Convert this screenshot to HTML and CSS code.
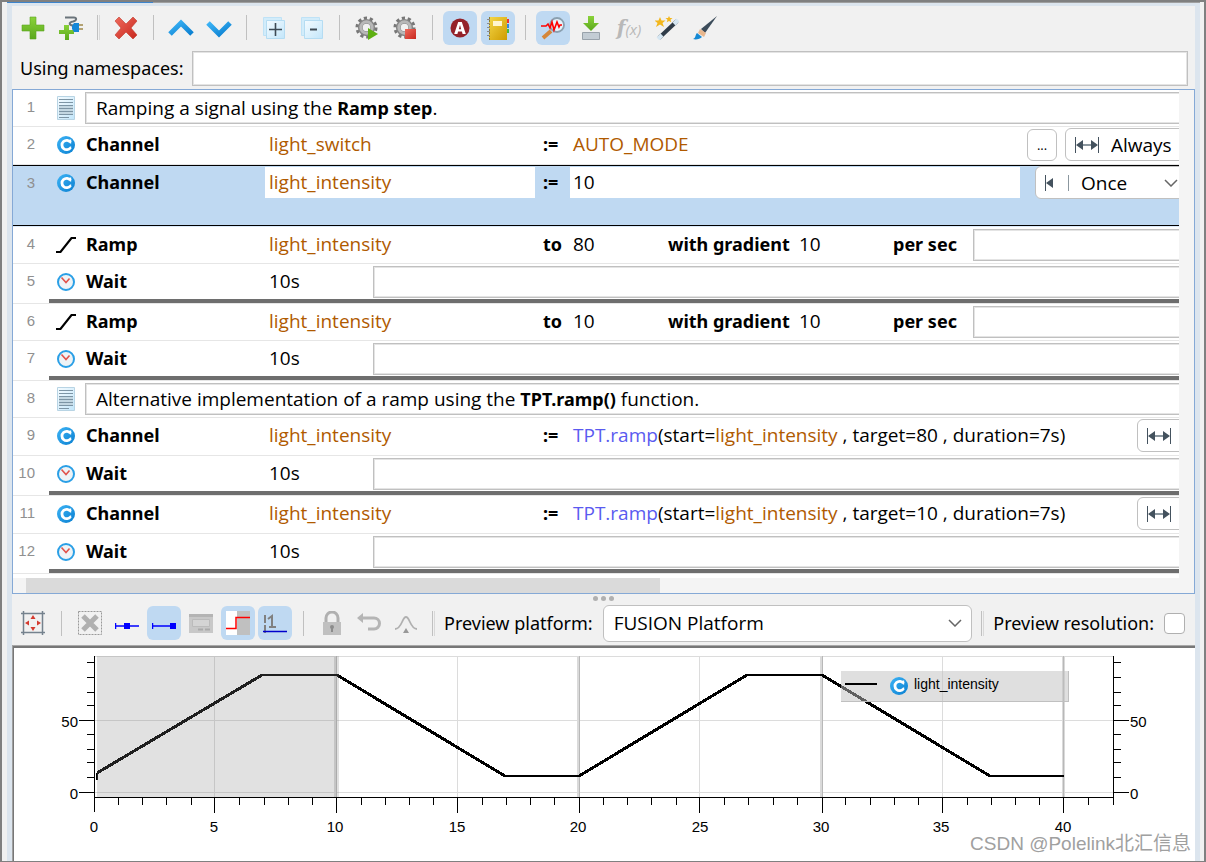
FILE: index.html
```
<!DOCTYPE html>
<html lang="en">
<head>
  <meta charset="UTF-8">
  <title>Step List Editor</title>
  <link rel="stylesheet" href="styles.css">
</head>
<body>

<!-- icons used more than once -->
<svg class="defs" width="0" height="0" aria-hidden="true">
  <defs>
    <linearGradient id="blue" x1="0" y1="0" x2="1" y2="1">
      <stop offset="0" stop-color="#3db4f6"/><stop offset="1" stop-color="#0a7fd0"/>
    </linearGradient>
    <linearGradient id="green" x1="0" y1="0" x2="0" y2="1">
      <stop offset="0" stop-color="#8ad23a"/><stop offset="1" stop-color="#5aa81c"/>
    </linearGradient>
    <linearGradient id="red" x1="0" y1="0" x2="1" y2="1">
      <stop offset="0" stop-color="#ef6a5c"/><stop offset="1" stop-color="#c8281e"/>
    </linearGradient>
    <linearGradient id="gold" x1="0" y1="0" x2="1" y2="1">
      <stop offset="0" stop-color="#f4d648"/><stop offset="1" stop-color="#cf9c00"/>
    </linearGradient>
    <linearGradient id="pale" x1="0" y1="0" x2="1" y2="1">
      <stop offset="0" stop-color="#f4fbff"/><stop offset="1" stop-color="#c3e6fa"/>
    </linearGradient>
    <symbol id="channel" viewBox="0 0 18 18">
      <circle cx="9" cy="9" r="9" fill="url(#blue)"/>
      <path d="M13.500 6.300A4.700 4.700 0 1 0 13.500 11.700" fill="none" stroke="#fff" stroke-width="2.800"/>
      <path d="M13.500 3.500v4M13.500 10.500v2" stroke="#fff" stroke-width="1.400"/>
    </symbol>
    <symbol id="comment" viewBox="0 0 18 24">
      <path d="M.5.5h17v23H.5z" fill="url(#pale)" stroke="#b8d4e4"/>
      <path d="M2 10h14v8H2z" fill="#c3d7e2"/>
      <path d="M2 3.500h14M2 6.500h14M2 9.500h14M2 12.500h14M2 15.500h14M2 18.500h14M2 21.500h10" stroke="#7d95a5"/>
    </symbol>
    <symbol id="clock" viewBox="0 0 18 18">
      <circle cx="9" cy="9" r="8" fill="#eef3f6" stroke="#2a9fe6" stroke-width="2"/>
      <path d="M4.500 4.500 9 9.500l3.500-4" fill="none" stroke="#e0534c" stroke-width="1.600"/>
    </symbol>
    <symbol id="ramp" viewBox="0 0 20 18">
      <path d="M0 16h4.500L15.500 2H20" fill="none" stroke="#000" stroke-width="2.200"/>
    </symbol>
    <symbol id="always" viewBox="0 0 24 16">
      <path d="M.5 0v16M23.500 0v16" stroke="#44525e"/>
      <path d="M5 8h14" stroke="#8b979f" stroke-width="2"/>
      <path d="M1 8l7-5v10zM23 8l-7-5v10z" fill="#44525e"/>
    </symbol>
    <symbol id="gear" viewBox="0 0 24 24">
      <circle cx="12" cy="12" r="9.500" fill="none" stroke="#777" stroke-width="4" stroke-dasharray="3.200 2.770"/>
      <circle cx="12" cy="12" r="6.500" fill="none" stroke="#858585" stroke-width="5"/>
      <circle cx="12" cy="12" r="6" fill="none" stroke="#b8b8b8" stroke-width="3"/>
    </symbol>
  </defs>
</svg>

<div class="window">
  <div class="tab-line"></div>
  <div class="editor">

    <div class="toolbar">
      <button aria-label="Add step"><svg width="24" height="24"><path d="M9 1h6v8h8v6h-8v8H9v-8H1V9h8z" fill="url(#green)" stroke="#5aa520" stroke-width=".6"/></svg></button>
      <button aria-label="Add connected step"><svg width="26" height="24"><path d="M7 1.500h9c3 0 3 3-1 4-5 1-4 4 1 4" fill="none" stroke="#6b747b" stroke-width="2"/><path d="M6 9h5v5h5v4h-5v6H7v-6H1v-4h5z" fill="url(#green)"/><path d="M14 10l2-3h5v9h-5l-2-3z" fill="#1687d8"/><path d="M21 9h4M21 13h4" stroke="#b3a273" stroke-width="2"/></svg></button>
      <i class="sep double"></i>
      <button aria-label="Delete"><svg width="24" height="24"><path d="M5 1l7 7 7-7 4 4-6 7 6 7-4 4-7-7-7 7-4-4 6-7-6-7z" fill="url(#red)" stroke="#c0392b" stroke-width=".6"/></svg></button>
      <i class="sep"></i>
      <button aria-label="Move up"><svg width="26" height="24"><path d="M2 18L13 7l11 11" fill="none" stroke="url(#blue)" stroke-width="5"/></svg></button>
      <button aria-label="Move down"><svg width="26" height="24"><path d="M2 7l11 11L24 7" fill="none" stroke="url(#blue)" stroke-width="5"/></svg></button>
      <i class="sep"></i>
      <button aria-label="Expand all"><svg width="24" height="24"><path d="M1.500 1.500h18v18h-18z" fill="#d2ecfa" stroke="#bfe2f6"/><path d="M4.500 4.500h18v18h-18z" fill="url(#pale)" stroke="#b5dcf2"/><path d="M7 13.500h13M13.500 7v13" stroke="#3e4a54" stroke-width="1.600"/></svg></button>
      <button aria-label="Collapse all"><svg width="24" height="24"><path d="M1.500 1.500h18v18h-18z" fill="#d2ecfa" stroke="#bfe2f6"/><path d="M4.500 4.500h18v18h-18z" fill="url(#pale)" stroke="#b5dcf2"/><path d="M10 13.500h7" stroke="#3e4a54" stroke-width="2"/></svg></button>
      <i class="sep"></i>
      <button aria-label="Run"><svg width="24" height="24"><use href="#gear" width="23" height="23"/><path d="M13 12l10 6-10 6z" fill="#5eb012"/></svg></button>
      <button aria-label="Stop"><svg width="24" height="24"><use href="#gear" width="23" height="23"/><path d="M12 13h11v10H12z" fill="url(#red)"/></svg></button>
      <i class="sep"></i>
      <button class="on" aria-label="Automatic"><svg width="24" height="24"><circle cx="12" cy="12" r="9.500" fill="#94222a"/><path fill-rule="evenodd" d="M10.200 6h3.600l4 12h-3.200l-.7-2.500h-3.800L9.400 18H6.200zM12 9l-1.200 4.200h2.400z" fill="#fff"/></svg></button>
      <button class="on" aria-label="Notebook"><svg width="24" height="24"><path d="M20 3h3v4h-3z" fill="#e33"/><path d="M20 8h3v4h-3z" fill="#38d"/><path d="M20 13h3v4h-3z" fill="#4b4"/><path d="M3 1h18v23H3z" fill="url(#gold)"/><path d="M7 5h9v5H7z" fill="#fff5cf"/><path d="M3.500 1v23" stroke="#8a7a30" stroke-dasharray="2 1"/><path d="M1 3.500h3M1 7.500h3M1 11.500h3M1 15.500h3M1 19.500h3" stroke="#8c8c8c"/></svg></button>
      <i class="sep"></i>
      <button class="on" aria-label="Signal preview"><svg width="24" height="24"><path d="M2 22l8-7" stroke="#d5873a" stroke-width="4"/><circle cx="16" cy="9" r="7" fill="#e7f4fc" stroke="#8ba0b0" stroke-width="1.800"/><path d="M0 10h5l2-2 2 4 2-6 2 8 3-8 2 5 1-2h2" fill="none" stroke="#f00" stroke-width="1.600"/></svg></button>
      <button aria-label="Import"><svg width="20" height="24"><path d="M7 0h6v7h5l-8 8-8-8h5z" fill="url(#green)"/><path d="M1.500 16.500h17v7h-17z" fill="#c3ccd4" stroke="#99a2ab"/></svg></button>
      <button class="fx" aria-label="Function">f<small>(x)</small></button>
      <button aria-label="Wizard"><svg width="24" height="24"><path d="M4 22L22 5" stroke="#2f3b48" stroke-width="4"/><path d="M3 23l4-4M19 8l4-4" stroke="#d5e6f2" stroke-width="4"/><path d="M5 1l1.500 3.500h4L7.500 7 9 11 5 8.500 1 11l1.500-4L-.5 4.500h4z" fill="#f3b71d"/><path d="M14 0l1 2h2.500l-2 1.700.8 2.500L14 5l-2.300 1.200.8-2.500-2-1.700H13z" fill="#f3b71d"/></svg></button>
      <button aria-label="Brush"><svg width="24" height="24"><path d="M24 0L12 17l-4-4z" fill="#3c4c5a"/><path d="M7 13l6 4-2 4-6-4z" fill="#e8b78e"/><path d="M0 23c3-1 2-4 4-6l5 4c-2 2-6 3-9 2z" fill="#1589d4"/></svg></button>
    </div>

    <div class="namespaces">
      <label for="namespaces">Using namespaces:</label>
      <input class="field" id="namespaces" type="text">
    </div>

    <div class="steps-panel">
      <div class="steps-view">
        <ol class="steps">
          <li class="step comment">
            <span class="num">1</span>
            <div class="body">
              <svg class="icon" width="20" height="24"><use href="#comment" width="18" height="24" x="1"/></svg>
              <div class="field text">Ramping a signal using the <b>Ramp step</b>.</div>
            </div>
          </li>
          <li class="step channel">
            <span class="num">2</span>
            <div class="body">
              <svg class="icon" width="20" height="18"><use href="#channel" width="18" height="18" x="1"/></svg>
              <b class="name">Channel</b>
              <span class="target var">light_switch</span>
              <b class="op">:=</b>
              <span class="value var">AUTO_MODE</span>
              <button class="more">...</button>
              <div class="combo always">
                <svg width="24" height="16"><use href="#always" width="24" height="16"/></svg>
                <select aria-label="Step 2 mode"><option>Always</option><option>Once</option></select>
              </div>
            </div>
          </li>
          <li class="step channel selected">
            <span class="num">3</span>
            <div class="body">
              <svg class="icon" width="20" height="18"><use href="#channel" width="18" height="18" x="1"/></svg>
              <b class="name">Channel</b>
              <input class="target var" type="text" aria-label="Step 3 signal" value="light_intensity">
              <b class="op">:=</b>
              <input class="value" type="text" aria-label="Step 3 value" value="10">
              <div class="combo once">
                <svg width="26" height="16"><path d="M.5 0v16" stroke="#44525e"/><path d="M1 8l7-5v10z" fill="#44525e"/><path d="M23.500 0v16" stroke="#8b979f"/></svg>
                <select aria-label="Step 3 mode"><option>Once</option><option>Always</option></select>
                <svg class="arrow" width="14" height="8"><path d="M1 1l6 6 6-6" fill="none" stroke="#666" stroke-width="1.500"/></svg>
              </div>
            </div>
          </li>
          <li class="step ramp">
            <span class="num">4</span>
            <div class="body">
              <svg class="icon" width="20" height="18"><use href="#ramp" width="20" height="18"/></svg>
              <b class="name">Ramp</b>
              <span class="target var">light_intensity</span>
              <b class="op">to</b>
              <span class="end">80</span>
              <b class="with">with gradient</b>
              <span class="gradient">10</span>
              <b class="per">per sec</b>
              <input class="field" type="text" aria-label="Step 4 description">
            </div>
          </li>
          <li class="step wait">
            <span class="num">5</span>
            <div class="body">
              <svg class="icon" width="20" height="18"><use href="#clock" width="18" height="18" x="1"/></svg>
              <b class="name">Wait</b>
              <span class="time">10s</span>
              <input class="field" type="text" aria-label="Step 5 description">
            </div>
          </li>
          <li class="step ramp">
            <span class="num">6</span>
            <div class="body">
              <svg class="icon" width="20" height="18"><use href="#ramp" width="20" height="18"/></svg>
              <b class="name">Ramp</b>
              <span class="target var">light_intensity</span>
              <b class="op">to</b>
              <span class="end">10</span>
              <b class="with">with gradient</b>
              <span class="gradient">10</span>
              <b class="per">per sec</b>
              <input class="field" type="text" aria-label="Step 6 description">
            </div>
          </li>
          <li class="step wait">
            <span class="num">7</span>
            <div class="body">
              <svg class="icon" width="20" height="18"><use href="#clock" width="18" height="18" x="1"/></svg>
              <b class="name">Wait</b>
              <span class="time">10s</span>
              <input class="field" type="text" aria-label="Step 7 description">
            </div>
          </li>
          <li class="step comment">
            <span class="num">8</span>
            <div class="body">
              <svg class="icon" width="20" height="24"><use href="#comment" width="18" height="24" x="1"/></svg>
              <div class="field text">Alternative implementation of a ramp using the <b>TPT.ramp()</b> function.</div>
            </div>
          </li>
          <li class="step channel">
            <span class="num">9</span>
            <div class="body">
              <svg class="icon" width="20" height="18"><use href="#channel" width="18" height="18" x="1"/></svg>
              <b class="name">Channel</b>
              <span class="target var">light_intensity</span>
              <b class="op">:=</b>
              <span class="value"><span class="func">TPT.ramp</span>(start=<span class="var">light_intensity</span> , target=80 , duration=7s)</span>
              <button class="combo mode" aria-label="Step 9 mode"><svg width="24" height="16"><use href="#always" width="24" height="16"/></svg></button>
            </div>
          </li>
          <li class="step wait">
            <span class="num">10</span>
            <div class="body">
              <svg class="icon" width="20" height="18"><use href="#clock" width="18" height="18" x="1"/></svg>
              <b class="name">Wait</b>
              <span class="time">10s</span>
              <input class="field" type="text" aria-label="Step 10 description">
            </div>
          </li>
          <li class="step channel">
            <span class="num">11</span>
            <div class="body">
              <svg class="icon" width="20" height="18"><use href="#channel" width="18" height="18" x="1"/></svg>
              <b class="name">Channel</b>
              <span class="target var">light_intensity</span>
              <b class="op">:=</b>
              <span class="value"><span class="func">TPT.ramp</span>(start=<span class="var">light_intensity</span> , target=10 , duration=7s)</span>
              <button class="combo mode" aria-label="Step 11 mode"><svg width="24" height="16"><use href="#always" width="24" height="16"/></svg></button>
            </div>
          </li>
          <li class="step wait">
            <span class="num">12</span>
            <div class="body">
              <svg class="icon" width="20" height="18"><use href="#clock" width="18" height="18" x="1"/></svg>
              <b class="name">Wait</b>
              <span class="time">10s</span>
              <input class="field" type="text" aria-label="Step 12 description">
            </div>
          </li>
        </ol>
      </div>
      <div class="scrollbar"><div class="thumb"></div></div>
    </div>

    <div class="splitter"><i></i><i></i><i></i></div>

    <div class="toolbar preview-bar">
      <button aria-label="Fit to window"><svg width="24" height="24"><path d="M2.500 0v24M21.500 0v24M0 2.500h24M0 21.500h24" stroke="#75828e" stroke-width="1.500"/><path d="M12 4l2.500 4h-5zM12 20l2.500-4h-5zM4 12l4-2.500v5zM20 12l-4-2.500v5z" fill="#d43a2f"/></svg></button>
      <i class="sep"></i>
      <button aria-label="Clear"><svg width="24" height="24"><path d="M.5.5h23v23H.5z" fill="none" stroke="#999" stroke-dasharray="2 1"/><path d="M5 5l14 14M19 5L5 19" stroke="#b0b0b0" stroke-width="5"/></svg></button>
      <button aria-label="Move points"><svg width="24" height="24"><path d="M.5 12v6M0 15h24" stroke="#00f" stroke-width="1.500"/><path d="M9 12h6v6H9z" fill="#00f"/></svg></button>
      <button class="on" aria-label="Move end point"><svg width="24" height="24"><path d="M.5 12v6M0 15h20" stroke="#00f" stroke-width="1.500"/><path d="M18 12h6v6h-6z" fill="#00f"/></svg></button>
      <button aria-label="Window"><svg width="24" height="24"><path d="M0 3h24v19H0z" fill="#c8c8c8"/><path d="M0 3h24v3H0z" fill="#b4b4b4"/><path d="M3.500 8.500h17v7h-17z" fill="#d4d4d4" stroke="#bbb"/><path d="M9 18.500h5M16 18.500h5" stroke="#aaa" stroke-width="2"/></svg></button>
      <button class="on" aria-label="Step interpolation"><svg width="24" height="24"><path d="M0 0h11v24H0z" fill="#fff"/><path d="M11 0h13v24H11z" fill="#c0c0c0"/><path d="M0 17.500h10V6.500h14" fill="none" stroke="#f00" stroke-width="1.500"/></svg></button>
      <button class="on" aria-label="Value axis"><svg width="24" height="24"><path d="M2 4v19" stroke="#808080" stroke-width="2" stroke-dasharray="8 2"/><path d="M5 8l4-3v12M6 16h7" fill="none" stroke="#808080" stroke-width="2"/><path d="M0 20.500h24" stroke="#00c" stroke-width="1.500"/></svg></button>
      <i class="sep"></i>
      <button aria-label="Lock"><svg width="24" height="24"><path d="M6 11V7a6 6 0 0 1 12 0v4" fill="none" stroke="#b0b0b0" stroke-width="3"/><path d="M3 11h18v13H3z" fill="#c0c0c0"/><circle cx="12" cy="16" r="2" fill="#8c8c8c"/><path d="M11 16h2v5h-2z" fill="#8c8c8c"/></svg></button>
      <button aria-label="Undo"><svg width="24" height="24"><path d="M4 7h13a5 5 0 0 1 0 11h-6" fill="none" stroke="#b5b5b5" stroke-width="3"/><path d="M0 7l6-5v10z" fill="#b5b5b5"/></svg></button>
      <button aria-label="Peak"><svg width="24" height="24"><path d="M1 18c7 0 7-12 11-12s4 12 11 12" fill="none" stroke="#b0b0b0" stroke-width="1.800"/><path d="M12 17l3 5H9z" fill="#999"/></svg></button>
      <i class="sep double"></i>
      <label for="platform">Preview platform:</label>
      <div class="combo platform">
        <select id="platform"><option>FUSION Platform</option></select>
        <svg class="arrow" width="14" height="8"><path d="M1 1l6 6 6-6" fill="none" stroke="#666" stroke-width="1.500"/></svg>
      </div>
      <i class="sep double"></i>
      <label for="resolution">Preview resolution:</label>
      <input id="resolution" type="checkbox">
    </div>

    <div class="preview">
      <svg class="chart" viewBox="0 0 1182 200" role="img" aria-label="light_intensity over time">
        <g transform="translate(81 8)">
          <!-- grid -->
          <path class="grid" d="M0 .5H1019M0 64.500H1019M0 136.500H1019M120.500 0V141M363.500 0V141M605.500 0V141M848.500 0V141"/>
          <path class="mark-band" d="M241.500 0V141M484.500 0V141M727.500 0V141M969.500 0V141"/>
          <path class="mark" d="M242.500 0V141M485.500 0V141M728.500 0V141M969.500 0V141"/>
          <!-- signal -->
          <path class="signal" d="M3 124V117M168 19H243M411 120H485M653 19H728M896 120H970"/>
          <path class="slope" d="M3 117L168 19M243 19L411 120M485 120L653 19M728 19L896 120"/>
          <rect class="range" x="3" y="0" width="242" height="141"/>
          <!-- axes -->
          <path class="axis" d="M.5 0V156M0 141.500H1019M1019.500 0V149"/>
          <path class="axis" d="M24.500 142v7M48.500 142v7M72.500 142v7M97.500 142v7M120.500 142v15M145.500 142v7M170.500 142v7M194.500 142v7M218.500 142v7M242.500 142v15M267.500 142v7M291.500 142v7M315.500 142v7M339.500 142v7M363.500 142v15M388.500 142v7M412.500 142v7M436.500 142v7M460.500 142v7M485.500 142v15M509.500 142v7M533.500 142v7M557.500 142v7M582.500 142v7M605.500 142v15M630.500 142v7M654.500 142v7M679.500 142v7M703.500 142v7M728.500 142v15M751.500 142v7M776.500 142v7M800.500 142v7M824.500 142v7M848.500 142v15M873.500 142v7M897.500 142v7M921.500 142v7M945.500 142v7M969.500 142v15M994.500 142v7"/>
          <path class="axis" d="M-7 6.500h7M-7 21.500h7M-7 36.500h7M-7 49.500h7M-15 64.500H0M-7 78.500h7M-7 93.500h7M-7 106.500h7M-7 121.500h7M-15 136.500H0"/>
          <path class="axis" d="M1020 6.500h7M1020 21.500h7M1020 36.500h7M1020 49.500h7M1020 64.500h15M1020 78.500h7M1020 93.500h7M1020 106.500h7M1020 121.500h7M1020 136.500h15"/>
          <g class="labels right"><text x="-16" y="71">50</text><text x="-16" y="143">0</text></g>
          <g class="labels"><text x="1036" y="71">50</text><text x="1036" y="143">0</text></g>
          <g class="labels middle">
            <text x="0" y="176">0</text><text x="120" y="176">5</text><text x="241" y="176">10</text>
            <text x="363" y="176">15</text><text x="484" y="176">20</text><text x="606" y="176">25</text>
            <text x="727" y="176">30</text><text x="847" y="176">35</text><text x="969" y="176">40</text>
          </g>
          <!-- legend -->
          <rect class="legend" x="747" y="15" width="228" height="31"/>
          <path class="legend-edge" d="M747 45.500h227.500V15"/>
          <path class="signal" d="M751 28h32"/>
          <use href="#channel" x="796" y="21" width="18" height="18"/>
          <text class="legend-text" x="820" y="33">light_intensity</text>
        </g>
      </svg>
      <span class="watermark">CSDN @Polelink北汇信息</span>
    </div>

  </div>
</div>

</body>
</html>
```
FILE: styles.css
```
* {
  box-sizing: border-box;
}
body {
  margin: 0;
  font-family: "Noto Sans", "Noto Sans CJK SC", sans-serif;
  font-size: 18px;
  line-height: 24px;
  color: #000;
  background: #f1f1f1;
}
.defs {
  position: absolute;
}
svg {
  display: block;
  flex: none;
}
button, input, select {
  font: inherit;
  color: inherit;
  margin: 0;
  padding: 0;
  border: none;
  background: none;
  outline: none;
}
.window {
  display: flex;
  flex-direction: column;
  min-height: 100vh;
  padding: 0 4px 0 5px;
  border: 2px solid #808080;
  border-bottom-width: 1px;
}
.tab-line {
  height: 1px;
  background: linear-gradient(to right, #3d84cc 146px, #a0a0a0 146px);
}
.editor {
  flex: 1;
  display: flex;
  flex-direction: column;
  border: 5px solid #dce5ee;
  border-top-width: 3px;
  border-bottom: none;
}

/* toolbars */
.toolbar {
  display: flex;
  align-items: center;
  gap: 4px;
  height: 45px;
  padding: 0 4px 2px;
}
.toolbar button {
  flex: none;
  display: flex;
  align-items: center;
  justify-content: center;
  width: 34px;
  height: 34px;
  border-radius: 6px;
}
.toolbar button.on {
  background: #bfd9f2;
}
.toolbar .fx {
  align-items: baseline;
  color: #b8b8b8;
  font: italic bold 20px/34px "DejaVu Serif", serif;
}
.fx small {
  font: italic 15px "Open Sans", sans-serif;
}
.sep {
  flex: none;
  width: 13px;
  height: 25px;
  background: linear-gradient(to right, transparent 6px, #c0c0c0 6px 7px, transparent 7px);
}
.sep.double {
  background: linear-gradient(to right, transparent 5px, #c0c0c0 5px 6px, transparent 6px 7px, #d8d8d8 7px 8px, transparent 8px);
}
.namespaces {
  display: flex;
  align-items: center;
  gap: 8px;
  padding: 0 7px 3px 8px;
}
.namespaces label {
  padding-bottom: 2px;
}
.field {
  flex: 1;
  min-width: 0;
  height: 32px;
  background: #fff;
  border: 1px solid #c0c0c0;
  box-shadow: inset 0 0 0 1px #e4e4e4;
}
.namespaces .field {
  height: 35px;
}

/* step list */
.steps-panel {
  border: 1px solid #85a9d6;
  background: #f4f4f4;
}
.steps-view {
  margin-right: 15px;
  padding-bottom: 4px;
  overflow: hidden;
  background: #fff;
}
.steps {
  width: calc(100% + 12px);
  margin: 0;
  padding: 0;
  list-style: none;
  font-family: "Open Sans", sans-serif;
  font-size: 19px;
}
.steps b {
  padding-bottom: 2px;
  font-family: "Noto Sans", sans-serif;
  font-size: 18px;
}
.steps span {
  padding-bottom: 2px;
}
.step {
  display: flex;
  height: 38px;
  border-bottom: 1px solid #e6e6e6;
}
.steps .num {
  width: 36px;
  padding-right: 14px;
  line-height: 34px;
  text-align: right;
  font-family: "Liberation Sans", sans-serif;
  font-size: 15px;
  color: #909090;
}
.body {
  flex: 1;
  min-width: 0;
  display: flex;
  align-items: center;
}
.channel .body {
  padding-bottom: 2px;
}
.comment, .ramp {
  height: 37px;
}
.wait {
  height: 40px;
}
.wait .body {
  border-bottom: 4px solid #6e6e6e;
}
.icon {
  margin: 0 10px 0 7px;
}
.comment .icon {
  margin-right: 9px;
}
.name {
  flex: none;
  width: 179px;
}
.target {
  flex: none;
  width: 270px;
  padding-left: 4px;
}
.op {
  flex: none;
  width: 35px;
  padding-left: 8px;
}
.value {
  flex: 1;
  min-width: 0;
  padding-left: 3px;
  white-space: pre;
}
.var {
  color: #b05a00;
}
.func {
  color: #5a5af0;
}
.end {
  width: 98px;
  padding-left: 3px;
}
.with {
  width: 128px;
  white-space: nowrap;
}
.gradient {
  width: 97px;
  padding-left: 3px;
}
.per {
  width: 80px;
}
.time {
  width: 108px;
  padding-left: 4px;
}
.text {
  padding-left: 10px;
  line-height: 30px;
}
.more {
  width: 30px;
  height: 32px;
  margin: 0 8px 0 7px;
  border: 1px solid #c0c0c0;
  border-radius: 6px;
  font-size: 13px;
}
.combo {
  display: flex;
  align-items: center;
  height: 33px;
  padding-left: 9px;
  border: 1px solid #c0c0c0;
  border-radius: 6px;
  background: #fff;
}
.combo select {
  flex: 1;
  min-width: 0;
  padding-left: 10px;
  font-family: "Open Sans", sans-serif;
  font-size: 19px;
  appearance: none;
}
.arrow {
  margin-right: 9px;
}
.always {
  width: 126px;
}
.always select {
  padding-left: 12px;
}
.once {
  width: 156px;
  margin-left: 15px;
}
.once .arrow {
  margin-right: 12px;
}
.mode {
  width: 54px;
}
.step.selected {
  height: 62px;
  background: #bfd9f2;
  border-top: 1px solid #000;
  border-bottom-color: #dcebfa;
  box-shadow: inset 0 -1px #000;
}
.selected .body {
  height: 35px;
}
.selected input {
  height: 31px;
  padding-bottom: 2px;
  background: #fff;
}
.scrollbar {
  height: 15px;
  padding: 0 534px 0 13px;
}
.thumb {
  height: 15px;
  background: #dadada;
}

/* preview */
.splitter {
  display: flex;
  justify-content: center;
  gap: 3px;
  height: 9px;
  padding-top: 2px;
}
.splitter i {
  width: 5px;
  height: 5px;
  border-radius: 50%;
  background: #b0b0b0;
}
.preview-bar {
  gap: 3px;
  height: 42px;
  padding-right: 10px;
}
.preview-bar .sep {
  margin: 0 2px;
}
.preview-bar .sep.double {
  margin: 0 1px;
}
.preview-bar label {
  flex: none;
  padding-bottom: 1px;
}
.platform {
  flex: 1;
  height: 37px;
  margin-left: 7px;
  padding-left: 0;
}
#resolution {
  width: 21px;
  height: 21px;
  margin-left: 7px;
  border: 1px solid #b0b0b0;
  border-radius: 4px;
  background: #fff;
  appearance: none;
}
.preview {
  flex: 1;
  position: relative;
  border-top: 1px solid #a8a8a8;
  border-left: 1px solid #a0a0a0;
  background: #fff;
  box-shadow: inset 1px 2px #777, inset 1px 1px #fff;
}
.chart {
  width: 100%;
  margin-top: 2px;
  shape-rendering: crispEdges;
  font-family: "Liberation Sans", sans-serif;
}
.chart use {
  shape-rendering: auto;
}
.grid {
  stroke: #dcdcdc;
}
.mark-band {
  stroke: #dadada;
  stroke-width: 3;
}
.mark {
  stroke: #b8b8b8;
}
.signal {
  fill: none;
  stroke: #000;
  stroke-width: 2;
}
.slope {
  stroke: #000;
  stroke-width: 3;
}
.range {
  fill: #808080;
  opacity: 0.24;
}
.axis {
  stroke: #000;
}
.labels {
  font-size: 15px;
}
.right {
  text-anchor: end;
}
.middle {
  text-anchor: middle;
}
.legend {
  fill: #c0c0c0;
  opacity: 0.5;
}
.legend-edge {
  fill: none;
  stroke: #c0c0c0;
}
.legend-text {
  font-size: 14px;
}
.watermark {
  position: absolute;
  right: 4px;
  bottom: 5px;
  font-family: "Liberation Sans", "Noto Sans CJK SC", sans-serif;
  font-size: 19px;
  color: #a0a0a0;
}
```
